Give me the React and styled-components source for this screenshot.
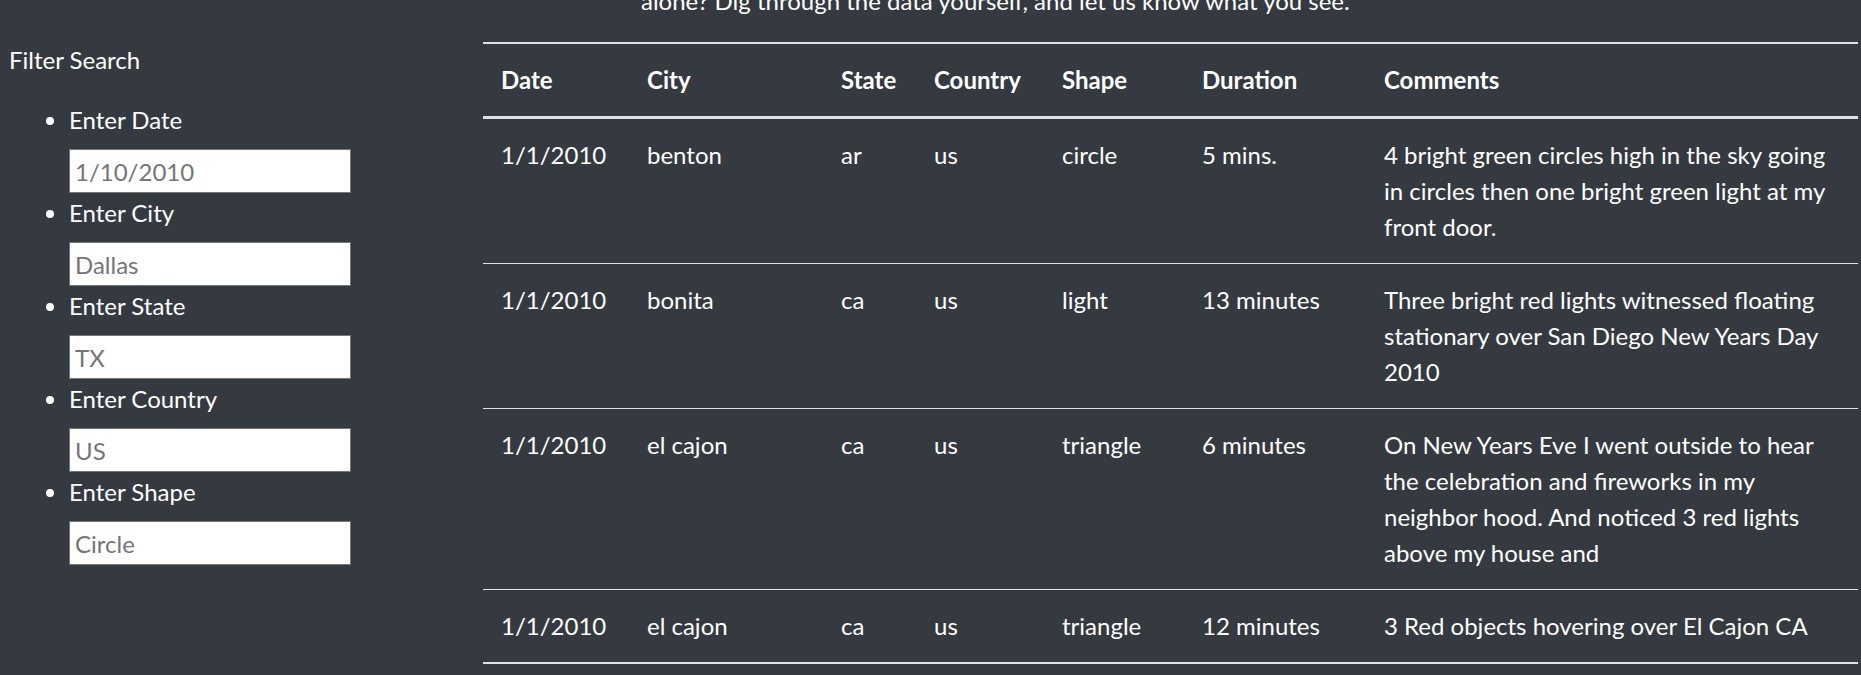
import React from 'react';
import styled, { createGlobalStyle } from 'styled-components';

/* --- Data --- */
const filters = [
  { id: 'datetime', label: 'Enter Date', placeholder: '1/10/2010' },
  { id: 'city', label: 'Enter City', placeholder: 'Dallas' },
  { id: 'state', label: 'Enter State', placeholder: 'TX' },
  { id: 'country', label: 'Enter Country', placeholder: 'US' },
  { id: 'shape', label: 'Enter Shape', placeholder: 'Circle' },
];

const columns = [
  { key: 'datetime', title: 'Date', width: 146 },
  { key: 'city', title: 'City', width: 194 },
  { key: 'state', title: 'State', width: 93 },
  { key: 'country', title: 'Country', width: 128 },
  { key: 'shape', title: 'Shape', width: 140 },
  { key: 'duration', title: 'Duration', width: 182 },
  { key: 'comments', title: 'Comments' },
];

const sightings = [
  {
    datetime: '1/1/2010',
    city: 'benton',
    state: 'ar',
    country: 'us',
    shape: 'circle',
    duration: '5 mins.',
    comments:
      '4 bright green circles high in the sky going in circles then one bright green light at my front door.',
  },
  {
    datetime: '1/1/2010',
    city: 'bonita',
    state: 'ca',
    country: 'us',
    shape: 'light',
    duration: '13 minutes',
    comments:
      'Three bright red lights witnessed floating stationary over San Diego New Years Day 2010',
  },
  {
    datetime: '1/1/2010',
    city: 'el cajon',
    state: 'ca',
    country: 'us',
    shape: 'triangle',
    duration: '6 minutes',
    comments:
      'On New Years Eve I went outside to hear the celebration and fireworks in my neighbor hood. And noticed 3 red lights above my house and',
  },
  {
    datetime: '1/1/2010',
    city: 'el cajon',
    state: 'ca',
    country: 'us',
    shape: 'triangle',
    duration: '12 minutes',
    comments: '3 Red objects hovering over El Cajon CA',
  },
];

/* --- Styles --- */
const GlobalStyle = createGlobalStyle`
  html, body {
    margin: 0;
    padding: 0;
    background: #343a40;
  }
  body {
    font-family: "Segoe UI", Lato, "Liberation Sans", sans-serif;
    font-size: 24px;
    line-height: 36px;
    color: #fff;
    overflow: hidden;
  }
`;

const Page = styled.div`
  display: flex;
  min-height: 675px;
  background: #343a40;
`;

const Sidebar = styled.aside`
  flex: 0 0 483px;
  box-sizing: border-box;
  padding: 42px 0 0 9px;
`;

const SidebarTitle = styled.div`
  line-height: 36px;
`;

const FilterList = styled.ul`
  margin: 24px 0 0;
  padding-left: 60px;
  list-style: disc;
`;

const FilterItem = styled.li`
  margin-bottom: 2px;

  & > label {
    display: block;
    line-height: 36px;
    margin-bottom: 11px;
  }
`;

const FilterInput = styled.input`
  display: block;
  box-sizing: border-box;
  width: 282px;
  height: 44px;
  padding: 0 5px;
  border: 1px solid #767676;
  background: #fff;
  font-family: inherit;
  font-size: 24px;
  color: #212529;

  &::placeholder {
    color: #757575;
  }
`;

const Main = styled.main`
  flex: 1;
  min-width: 0;
  padding-right: 3px;
`;

const Intro = styled.p`
  margin: -17px 0 23px;
  padding-left: 158px;
  line-height: 36px;
  white-space: nowrap;
`;

const Table = styled.table`
  width: 100%;
  table-layout: fixed;
  border-collapse: collapse;
  color: #fff;
`;

const HeadCell = styled.th`
  box-sizing: border-box;
  width: ${props => (props.$width ? `${props.$width}px` : 'auto')};
  padding: 18px;
  text-align: left;
  font-weight: 700;
  border-top: 2px solid #dee2e6;
  border-bottom: 3px solid #dee2e6;
`;

const Row = styled.tr`
  border-top: 1.5px solid #dee2e6;

  &:last-child {
    border-bottom: 2px solid #dee2e6;
  }
`;

const Cell = styled.td`
  padding: 18px;
  vertical-align: top;
`;

/* --- Component --- */
const App = () => (
  <>
    <GlobalStyle />
    <Page>
      <Sidebar>
        <SidebarTitle>Filter Search</SidebarTitle>
        <FilterList>
          {filters.map(f => (
            <FilterItem key={f.id}>
              <label htmlFor={f.id}>{f.label}</label>
              <FilterInput id={f.id} type="text" placeholder={f.placeholder} />
            </FilterItem>
          ))}
        </FilterList>
      </Sidebar>
      <Main>
        <Intro>alone? Dig through the data yourself, and let us know what you see.</Intro>
        <Table>
          <thead>
            <tr>
              {columns.map(c => (
                <HeadCell key={c.key} $width={c.width}>
                  {c.title}
                </HeadCell>
              ))}
            </tr>
          </thead>
          <tbody>
            {sightings.map((s, i) => (
              <Row key={i}>
                {columns.map(c => (
                  <Cell key={c.key}>{s[c.key]}</Cell>
                ))}
              </Row>
            ))}
          </tbody>
        </Table>
      </Main>
    </Page>
  </>
);

export default App;
